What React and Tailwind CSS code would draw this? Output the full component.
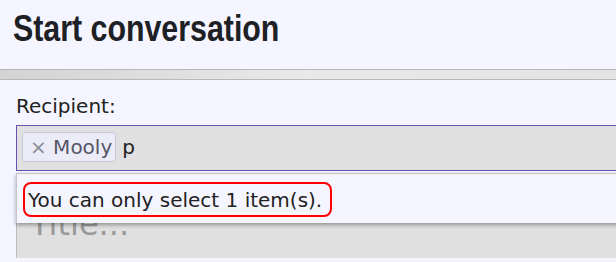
import React from "react";

const App = () => {
  return (
    <div className="w-[616px] h-[262px] overflow-hidden bg-[#f5f5ff] relative" style={{ fontFamily: "'DejaVu Sans', sans-serif" }}>
      <div className="h-[69px] pl-[13px] pt-[7px]">
        <h1
          className="text-[37px] leading-[44px] font-bold text-[#1d2024] whitespace-nowrap origin-left scale-x-[0.82]"
          style={{ fontFamily: "'Liberation Sans', Arial, sans-serif" }}
        >
          Start conversation
        </h1>
      </div>
      <div className="h-[11px] border-y border-[#b8b8bc] bg-gradient-to-r from-[#d3d3d3] via-[#e9e9e9] to-[#e3e3e3]" />

      <div className="pl-4 relative">
        <div className="pt-[14px] text-[20px] leading-[24px] text-[#222]">Recipient:</div>
        <div className="mt-[7px] w-[700px] h-[46px] border border-[#6a50b0] bg-[#e0e0e0] flex items-start pl-[5px] pt-[6px] gap-[6px]">
          <span className="h-[30px] pl-[7px] pr-[3px] flex items-center bg-[#ececf8] border border-[#c9c9d9] rounded-[3px] text-[20px] text-[#555566] whitespace-pre">
            <span className="text-[#8a8a95]">×</span> Mooly
          </span>
          <span className="h-[30px] flex items-center text-[20px] text-[#222]">p</span>
        </div>
        <div className="mt-[2px] w-[700px] h-[85px] border-l border-[#bbbbbb] bg-[#e0e0e0] pl-[13px] pt-[31px] text-[32px] leading-[40px] text-[#9a9a9a]">
          Title...
        </div>

        <div className="absolute left-4 top-[93px] w-[700px] h-[50px] bg-[#f5f5ff] border-t border-l border-[#c4c4c8] shadow-[0_2px_4px_rgba(0,0,0,0.35)] pl-[6px] pt-[8px]">
          <div className="inline-flex items-center h-[35px] w-[309px] border-2 border-[#ff0000] rounded-[8px] pl-[3px] text-[20px] text-[#222] whitespace-nowrap">
            You can only select 1 item(s).
          </div>
        </div>
      </div>
    </div>
  );
};

export default App;
